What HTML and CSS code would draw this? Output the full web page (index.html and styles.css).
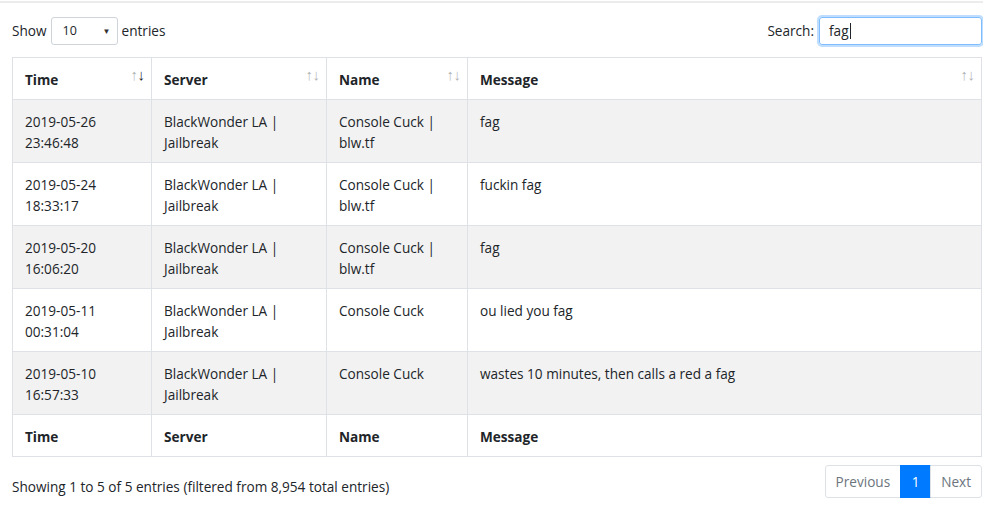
FILE: index.html
```html
<!DOCTYPE html>
<html>
<head>
<meta charset="utf-8">
<link rel="stylesheet" href="styles.css">
</head>
<body>
<div class="topline"></div>
<div class="wrapper">
  <div class="controls">
    <label class="length">Show
      <span class="select"><span class="select-val">10</span><span class="caret">▼</span></span>
      entries</label>
    <label class="search">Search: <span class="input">fag<span class="cursor"></span></span></label>
  </div>
  <table class="dt">
    <thead>
      <tr>
        <th class="c-time sort active">Time</th>
        <th class="c-server sort">Server</th>
        <th class="c-name sort">Name</th>
        <th class="c-msg sort">Message</th>
      </tr>
    </thead>
    <tbody>
      <tr class="odd"><td>2019-05-26<br>23:46:48</td><td>BlackWonder LA |<br>Jailbreak</td><td>Console Cuck |<br>blw.tf</td><td>fag</td></tr>
      <tr><td>2019-05-24<br>18:33:17</td><td>BlackWonder LA |<br>Jailbreak</td><td>Console Cuck |<br>blw.tf</td><td>fuckin fag</td></tr>
      <tr class="odd"><td>2019-05-20<br>16:06:20</td><td>BlackWonder LA |<br>Jailbreak</td><td>Console Cuck |<br>blw.tf</td><td>fag</td></tr>
      <tr><td>2019-05-11<br>00:31:04</td><td>BlackWonder LA |<br>Jailbreak</td><td>Console Cuck</td><td>ou lied you fag</td></tr>
      <tr class="odd"><td>2019-05-10<br>16:57:33</td><td>BlackWonder LA |<br>Jailbreak</td><td>Console Cuck</td><td>wastes 10 minutes, then calls a red a fag</td></tr>
    </tbody>
    <tfoot>
      <tr><th>Time</th><th>Server</th><th>Name</th><th>Message</th></tr>
    </tfoot>
  </table>
  <div class="bottom">
    <div class="info">Showing 1 to 5 of 5 entries (filtered from 8,954 total entries)</div>
    <ul class="pager">
      <li class="pg disabled">Previous</li>
      <li class="pg current">1</li>
      <li class="pg disabled">Next</li>
    </ul>
  </div>
</div>
</body>
</html>
```
FILE: styles.css
```css
* { box-sizing: border-box; }
body {
  margin: 0;
  font-family: "Open Sans", "Noto Sans", sans-serif;
  font-size: 13.6px;
  line-height: 21px;
  color: #212529;
  background: #fff;
}
.topline {
  height: 3px;
  border-top: 1px solid #fff;
  border-bottom: 2px solid #ececec;
}
.wrapper {
  padding: 0 1px 0 12px;
}
.controls {
  display: flex;
  justify-content: space-between;
  align-items: center;
  margin-top: 13px;
  height: 29px;
}
.length, .search {
  display: flex;
  align-items: center;
  gap: 5px;
}
.length { gap: 4px; }
.select {
  display: inline-flex;
  align-items: center;
  justify-content: space-between;
  width: 67px;
  height: 28px;
  border: 1px solid #ced4da;
  border-radius: 3px;
  padding: 0 6px 0 11px;
  font-size: 12.5px;
}
.caret {
  font-size: 8px;
  color: #333;
}
.input {
  display: inline-flex;
  align-items: center;
  width: 163px;
  height: 28px;
  border: 1px solid #80bdff;
  border-radius: 3px;
  box-shadow: 0 0 0 2px rgba(0,123,255,.25);
  padding: 0 9px;
}
.cursor {
  display: inline-block;
  width: 1px;
  height: 16px;
  background: #212529;
  margin-left: 1px;
}
.dt {
  width: 100%;
  border-collapse: collapse;
  margin-top: 12px;
  border: 1px solid #dee2e6;
}
.dt th, .dt td {
  border: 1px solid #dee2e6;
  padding: 10.5px 11px 9.5px 12px;
  text-align: left;
  vertical-align: top;
}
.dt th { font-weight: 700; }
.c-time { width: 139px; }
.c-server { width: 175px; }
.c-name { width: 141px; }
.dt tr.odd td { background: #f2f2f2; }
.sort { position: relative; padding-right: 30px; }
.sort::before, .sort::after {
  position: absolute;
  top: 8px;
  font-size: 15px;
  line-height: 16px;
  font-weight: 400;
  opacity: 0.35;
}
.sort::before { content: "\2191"; right: 13px; }
.sort::after { content: "\2193"; right: 6px; }
.active::after { opacity: 1; }
.bottom {
  display: flex;
  justify-content: space-between;
  align-items: flex-start;
  margin-top: 8px;
}
.info { padding-top: 11px; }
.pager {
  display: flex;
  list-style: none;
  margin: 0;
  padding: 0;
}
.pg {
  height: 33px;
  line-height: 31px;
  padding: 0 10px;
  border: 1px solid #dee2e6;
  color: #6c757d;
  margin-left: -1px;
  font-size: 13.6px;
}
.pg:first-child { border-radius: 3px 0 0 3px; }
.pg:last-child { border-radius: 0 3px 3px 0; }
.pg.current {
  background: #007bff;
  border-color: #007bff;
  color: #fff;
  width: 31px;
  padding: 0;
  text-align: center;
}
```
